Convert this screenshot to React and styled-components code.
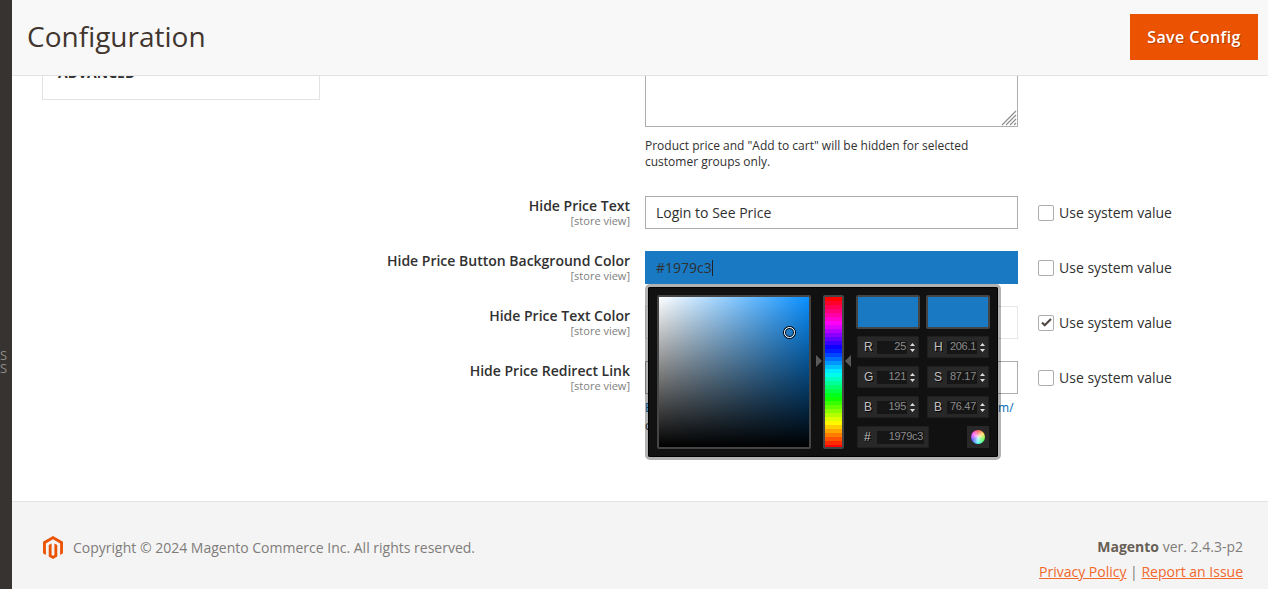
import React from 'react';
import styled, { createGlobalStyle } from 'styled-components';

const Global = createGlobalStyle`
  html, body { margin: 0; padding: 0; height: 100%; background: #fff; overflow: hidden; }
  body { font-family: "Open Sans", "Liberation Sans", sans-serif; color: #303030; font-size: 14px; }
  * { box-sizing: border-box; }
`;

const Page = styled.div`display: flex; width: 1268px; height: 589px; overflow: hidden;`;
const Rail = styled.aside`
  width: 12px; flex: none; background: #373330; color: #8f8b87; font-size: 13px; line-height: 13px;
  display: flex; flex-direction: column; justify-content: center; align-items: flex-end; overflow: hidden; padding-top: 135px;
  span { display: block; white-space: nowrap; margin-right: 6px; width: 6px; }
`;
const Main = styled.div`flex: 1; min-width: 0; display: flex; flex-direction: column;`;
const Header = styled.header`
  height: 76px; flex: none; background: #f8f8f8; border-bottom: 1px solid #e3e3e3;
  display: flex; align-items: center; justify-content: space-between; padding: 0 10px 0 15px;
`;
const Title = styled.h1`margin: 0 0 4px; font-size: 28px; font-weight: 400; color: #41362f; line-height: 36px;`;
const SaveButton = styled.button`
  width: 128px; height: 46px; border: 0; background: #eb5202; color: #fff; margin-bottom: 1px;
  font: 600 16px "Open Sans", sans-serif; padding: 0; letter-spacing: .4px; text-shadow: 1px 1px 0 rgba(0,0,0,.25);
`;
const Content = styled.div`flex: 1; display: flex; min-height: 0; padding-left: 30px;`;
const TabPanel = styled.nav`
  width: 278px; height: 24px; flex: none; border: 1px solid #e3e3e3; border-top: 0; overflow: hidden; padding-left: 15px;
  span { display: block; margin-top: -11px; font-size: 14px; font-weight: 700; line-height: 16px; color: #303030; }
`;
const Form = styled.div`flex: 1; display: flex; flex-direction: column;`;
const ControlOnly = styled.div`margin-left: 325px; width: 373px;`;
const TextArea = styled.div`
  height: 51px; border: 1px solid #adadad; border-top: 0; position: relative; background: #fff;
  svg { position: absolute; right: 0; bottom: 0; }
`;
const Note = styled.p`margin: 11px 0 0; font-size: 12px; line-height: 16.2px; color: #303030;`;
const Rows = styled.div`margin-top: 26px; display: flex; flex-direction: column; gap: 22px;`;
const Row = styled.div`display: flex; align-items: flex-start; height: 33px;`;
const LabelCell = styled.div`width: 310px; text-align: right; margin-right: 15px;`;
const LabelText = styled.div`font-size: 14px; font-weight: 600; line-height: 19px; color: #303030;`;
const Scope = styled.div`font-size: 11px; line-height: 11px; color: #808080;`;
const ControlCell = styled.div`width: 373px; position: relative;`;
const Field = styled.div`
  height: 33px; border: 1px solid ${p => p.$faded ? '#e6e6e6' : p.$color ? p.$color : '#adadad'};
  background: ${p => p.$color || '#fff'}; padding: 0 10px; font-size: 14px; line-height: 31px; color: #303030;
  white-space: nowrap; overflow: hidden;
`;
const Caret = styled.span`display: inline-block; width: 1px; height: 16px; background: #222; vertical-align: -3px;`;
const SystemValue = styled.label`display: flex; align-items: center; margin-left: 20px; height: 33px; font-size: 14px; color: #303030; gap: 5px;`;
const Box = styled.span`
  width: 16px; height: 16px; border: 1px solid #adadad; border-radius: 2px; background: #fff;
  display: flex; align-items: center; justify-content: center;
`;
const BelowNote = styled.p`
  margin: 5px 0 0; font-size: 12px; line-height: 18px; color: #303030; white-space: nowrap;
  a { color: #006bb4; text-decoration: none; }
`;
const Spacer = styled.div`flex: 1;`;
const Footer = styled.footer`
  height: 88px; flex: none; background: #f4f4f4; border-top: 1px solid #e3e3e3;
  display: flex; justify-content: space-between; padding: 0 25px 0 31px;
`;
const Copyright = styled.div`display: flex; align-items: center; gap: 10px; color: #7f7c7a; font-size: 14px; height: 90px;`;
const Legal = styled.div`text-align: right; padding-top: 35px; font-size: 14px; color: #7f7c7a; line-height: 19px;`;
const Version = styled.div`margin-bottom: 6px; b { font-weight: 700; color: #676056; }`;
const Links = styled.div`color: #777; a { color: #f2672b; text-decoration: underline; }`;

const Picker = styled.div`
  position: absolute; top: 100%; left: 0; z-index: 5; width: 356px; height: 176px;
  border: 3px solid rgba(0,0,0,.3); border-radius: 5px; background: #111 padding-box; box-shadow: inset 0 0 0 1px #000;
  padding: 8px 8px 8px 9px; display: flex; font-family: "Liberation Sans", Arial, sans-serif;
`;
const SatVal = styled.div`
  width: 154px; height: 154px; flex: none; border: 2px solid #454545; border-radius: 2px; position: relative;
  background: linear-gradient(to bottom, rgba(0,0,0,0), #000), linear-gradient(to right, #fff, #0a90ff);
`;
const Handle = styled.span`
  position: absolute; left: 125px; top: 30px; width: 11px; height: 11px; border-radius: 50%;
  border: 1px solid #fff; box-shadow: 0 0 0 1px #000, inset 0 0 0 1px #000;
`;
const hueColors = [];
for (let i = 0; i < 38; i++) {
  const h = 360 - (i * 360) / 37;
  hueColors.push(`hsl(${h} 100% 50%) ${i * 4}px ${(i + 1) * 4}px`);
}
const HueWrap = styled.div`
  width: 35px; flex: none; margin-left: 5px; padding-bottom: 22px; height: 154px;
  display: flex; align-items: center; justify-content: space-between; position: relative;
`;
const HueBar = styled.div`
  position: absolute; left: 7px; top: 0; width: 21px; height: 154px; border: 2px solid #454545; border-radius: 2px;
`;
const Arrow = styled.span`
  width: 0; height: 0; border-top: 6px solid transparent; border-bottom: 6px solid transparent;
  ${p => p.$left ? 'border-right: 6px solid #5a5a5a;' : 'border-left: 6px solid #5a5a5a;'}
`;
const Side = styled.div`margin-left: 5px; display: grid; grid-template-columns: 64px 64px; column-gap: 6px; grid-auto-rows: min-content;`;
const Swatch = styled.div`height: 34px; background: #1979c3; border: 2px solid #454545; border-radius: 2px; margin-bottom: 7px;`;
const FieldWrap = styled.div`
  width: ${p => p.$wide ? '72px' : '62px'}; height: 22px; margin: 0 0 8px 1px; background: #282828; border: 1px solid #1f1f1f;
  display: flex; align-items: center; padding-left: 6px; border-radius: 1px;
`;
const FieldName = styled.span`width: 8px; margin-right: 5px; font-size: 12px; color: #c0c0c0; text-shadow: 1px 1px 0 #000; flex: none;`;
const FieldValue = styled.span`
  width: ${p => p.$wide ? '47px' : '30px'}; height: 13px; background: #161616; color: #8a8a8a;
  font-size: 11px; line-height: 11px; text-align: right; padding-right: 1px; letter-spacing: -.3px; white-space: nowrap; flex: none; overflow: hidden;
`;
const Spin = styled.svg`margin-left: 3px; flex: none;`;
const Bottom = styled.div`grid-column: 1 / -1; display: flex; justify-content: space-between;`;
const WheelButton = styled.div`
  width: 22px; height: 22px; background: #282828; display: flex; align-items: center; justify-content: center; margin-right: 1px;
  span { width: 14px; height: 14px; border-radius: 50%; background: radial-gradient(circle, rgba(255,255,255,.8) 0, rgba(255,255,255,0) 70%), conic-gradient(#f55, #fd5, #5f5, #5ff, #55f, #f5f, #f55); }
`;

const Spinner = () => (
  <Spin width="5" height="9" viewBox="0 0 5 9"><path d="M2.5 0L5 3H0zM2.5 9L0 6h5z" fill="#ddd" /></Spin>
);
const PF = ({ name, value }) => (
  <FieldWrap><FieldName>{name}</FieldName><FieldValue>{value}</FieldValue><Spinner /></FieldWrap>
);

const Check = () => (
  <svg width="11" height="9" viewBox="0 0 12 10"><path d="M1 5l3 3 7-7" fill="none" stroke="#514943" strokeWidth="2.4" /></svg>
);

const rows = [
  { label: 'Hide Price Text', value: 'Login to See Price' },
  { label: 'Hide Price Button Background Color', value: '#1979c3', color: '#1979c3', picker: true },
  { label: 'Hide Price Text Color', value: '', faded: true, checked: true },
  { label: 'Hide Price Redirect Link', value: '' },
];

function ColorPicker() {
  return (
    <Picker>
      <SatVal><Handle /></SatVal>
      <HueWrap>
        <Arrow />
        <HueBar style={{ background: `linear-gradient(to bottom, ${hueColors.join(',')})` }} />
        <Arrow $left />
      </HueWrap>
      <Side>
        <Swatch /><Swatch />
        <PF name="R" value="25" /><PF name="H" value="206.1" />
        <PF name="G" value="121" /><PF name="S" value="87.17" />
        <PF name="B" value="195" /><PF name="B" value="76.47" />
        <Bottom>
          <FieldWrap $wide><FieldName>#</FieldName><FieldValue $wide>1979c3</FieldValue></FieldWrap>
          <WheelButton><span /></WheelButton>
        </Bottom>
      </Side>
    </Picker>
  );
}

export default function App() {
  return (
    <Page>
      <Global />
      <Rail><span>S</span><span>S</span></Rail>
      <Main>
        <Header>
          <Title>Configuration</Title>
          <SaveButton>Save Config</SaveButton>
        </Header>
        <Content>
          <TabPanel><span>ADVANCED</span></TabPanel>
          <Form>
            <ControlOnly>
              <TextArea>
                <svg width="16" height="16" viewBox="0 0 16 16"><path d="M15 1L1 15M15 5L5 15M15 9L9 15M15 13L13 15" stroke="#8a8a8a" strokeWidth="1.1" fill="none" /></svg>
              </TextArea>
              <Note>Product price and "Add to cart" will be hidden for selected customer groups only.</Note>
            </ControlOnly>
            <Rows>
              {rows.map((r) => (
                <Row key={r.label}>
                  <LabelCell>
                    <LabelText>{r.label}</LabelText>
                    <Scope>[store view]</Scope>
                  </LabelCell>
                  <ControlCell>
                    <Field $color={r.color} $faded={r.faded}>{r.value}{r.picker && <Caret />}</Field>
                    {r.picker && <ColorPicker />}
                    {r.label.includes('Redirect') && (
                      <BelowNote><a>Enter the URL of the page to redirect to, e.g. https://example.com/</a><br />customer/account/login</BelowNote>
                    )}
                  </ControlCell>
                  <SystemValue>
                    <Box>{r.checked && <Check />}</Box>
                    Use system value
                  </SystemValue>
                </Row>
              ))}
            </Rows>
          </Form>
        </Content>
        <Spacer />
        <Footer>
          <Copyright>
            <svg width="20" height="23" viewBox="1.6 0 20.8 24"><path fill="#eb5202" d="M12 24l-4.455-2.572v-12l2.97-1.715v12.001l1.485.902 1.485-.902V7.713l2.97 1.715v12L12 24zM22.391 6v12l-2.969 1.714V7.713L12 3.43 4.574 7.713v12.001L1.609 18V6L12 0l10.391 6z" /></svg>
            <span>Copyright © 2024 Magento Commerce Inc. All rights reserved.</span>
          </Copyright>
          <Legal>
            <Version><b>Magento</b> ver. 2.4.3-p2</Version>
            <Links><a>Privacy Policy</a> | <a>Report an Issue</a></Links>
          </Legal>
        </Footer>
      </Main>
    </Page>
  );
}
